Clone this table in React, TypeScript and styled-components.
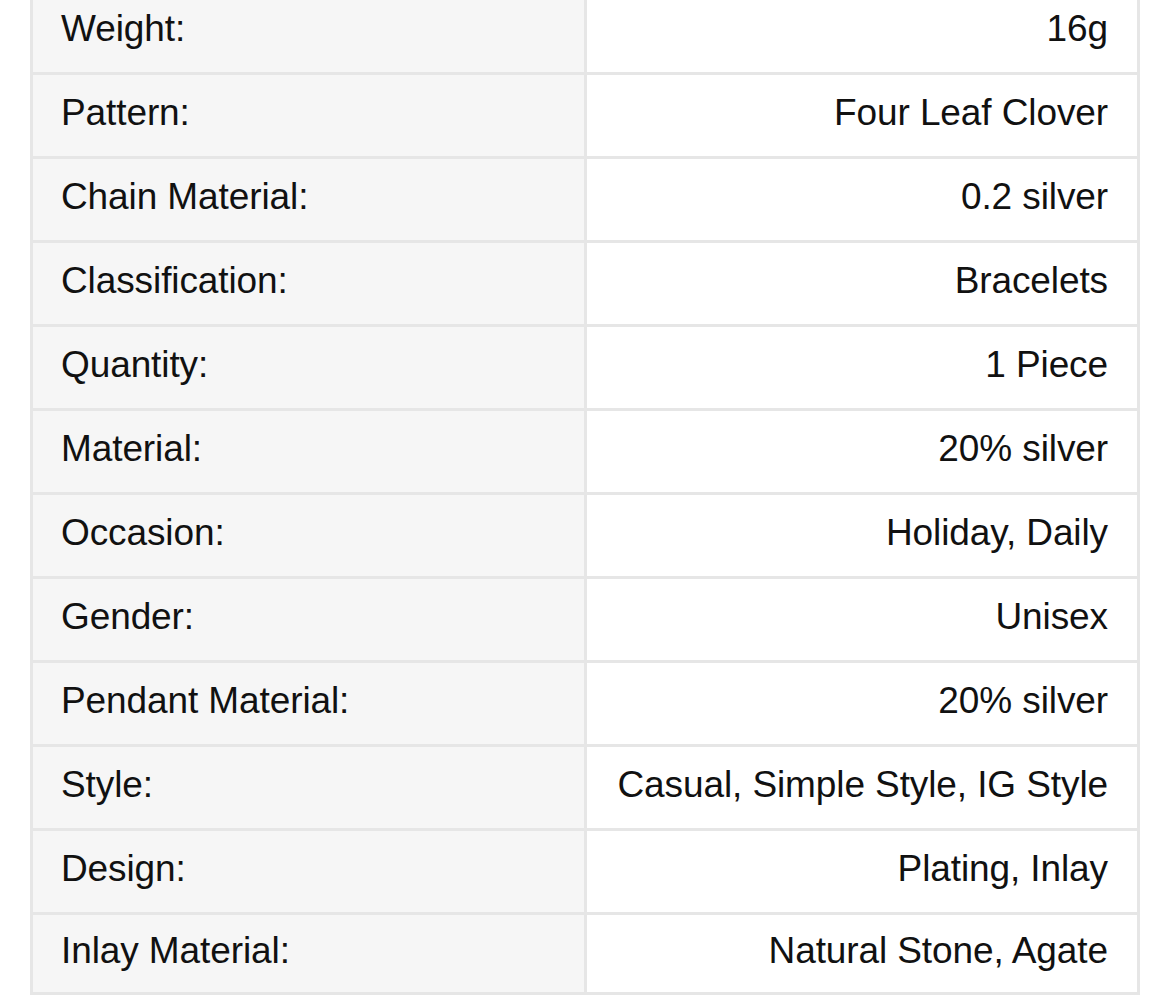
import React from "react";
import styled, { createGlobalStyle } from "styled-components";

const Global = createGlobalStyle`
  html, body { margin: 0; padding: 0; background: #ffffff; }
  body { font-family: "Liberation Sans", Arial, sans-serif; overflow: hidden; }
`;

const Page = styled.div`
  width: 1170px;
  height: 996px;
  overflow: hidden;
  background: #ffffff;
`;

const Table = styled.div`
  margin: -12px 0 0 30px;
  width: 1110px;
  border: 3px solid #e6e6e6;
  box-sizing: border-box;
  display: grid;
  grid-template-columns: 551px 3px 550px;
  background: #e6e6e6;
  row-gap: 3px;
`;

const Label = styled.div<{ $h: number }>`
  height: ${(p) => p.$h}px;
  box-sizing: border-box;
  background: #f6f6f6;
  display: flex;
  align-items: center;
  padding: 0 0 5px 28px;
  font-size: 37px;
  color: #111111;
  letter-spacing: -0.1px;
`;

const Divider = styled.div`
  background: #e6e6e6;
`;

const Value = styled.div<{ $h: number }>`
  height: ${(p) => p.$h}px;
  box-sizing: border-box;
  background: #ffffff;
  display: flex;
  align-items: center;
  justify-content: flex-end;
  padding: 0 29px 5px 0;
  font-size: 37px;
  color: #111111;
  letter-spacing: -0.1px;
`;

const rows: [string, string][] = [
  ["Weight:", "16g"],
  ["Pattern:", "Four Leaf Clover"],
  ["Chain Material:", "0.2 silver"],
  ["Classification:", "Bracelets"],
  ["Quantity:", "1 Piece"],
  ["Material:", "20% silver"],
  ["Occasion:", "Holiday, Daily"],
  ["Gender:", "Unisex"],
  ["Pendant Material:", "20% silver"],
  ["Style:", "Casual, Simple Style, IG Style"],
  ["Design:", "Plating, Inlay"],
  ["Inlay Material:", "Natural Stone, Agate"],
];

export default function App() {
  return (
    <Page>
      <Global />
      <Table>
        {rows.map(([k, v], i) => {
          const h = i === rows.length - 1 ? 77 : 81;
          return (
            <React.Fragment key={k}>
              <Label $h={h}>{k}</Label>
              <Divider />
              <Value $h={h}>{v}</Value>
            </React.Fragment>
          );
        })}
      </Table>
    </Page>
  );
}
